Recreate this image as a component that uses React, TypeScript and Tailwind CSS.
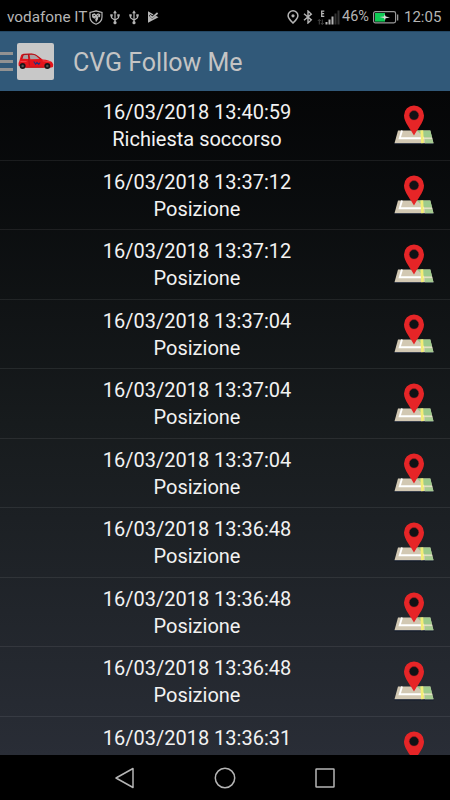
interface Entry {
  time: string;
  label?: string;
}

const entries: Entry[] = [
  { time: "16/03/2018 13:40:59", label: "Richiesta soccorso" },
  { time: "16/03/2018 13:37:12", label: "Posizione" },
  { time: "16/03/2018 13:37:12", label: "Posizione" },
  { time: "16/03/2018 13:37:04", label: "Posizione" },
  { time: "16/03/2018 13:37:04", label: "Posizione" },
  { time: "16/03/2018 13:37:04", label: "Posizione" },
  { time: "16/03/2018 13:36:48", label: "Posizione" },
  { time: "16/03/2018 13:36:48", label: "Posizione" },
  { time: "16/03/2018 13:36:48", label: "Posizione" },
  { time: "16/03/2018 13:36:31" },
];

function ShieldIcon() {
  return (
    <svg className="w-[14px] h-[15px]" viewBox="0 0 14 15" fill="none">
      <path
        d="M7 .8 13 2.500V7c0 3.400-2.400 5.900-6 7.200C3.400 12.900 1 10.400 1 7V2.500Z"
        stroke="#b5b5b5"
        strokeWidth="1.200"
      />
      <path
        d="M3 4.200 5.600 3.300 7 4.700 9 3.200 11.300 4.300 11 7.500 9.500 6.600 8.900 9.500 7 12.200 6.200 9.300 7.300 7.200 5.300 8.700 3.100 7.200Z"
        fill="#b5b5b5"
      />
      <path d="M4.500 5.500h1.500M8 6l1.500-1" stroke="#111" strokeWidth=".8" />
    </svg>
  );
}

function UsbIcon() {
  return (
    <svg className="w-[10px] h-[15px]" viewBox="0 0 10 15" fill="none">
      <path
        d="M5 2v10.500M1.500 5.500v2.300L5 10.300l3.500-2.500V5.500"
        stroke="#b5b5b5"
        strokeWidth="1.200"
      />
      <path d="M5 .3 6.900 3.200H3.100ZM.3 4.300h2.400v2.300H.3ZM7.300 4.300h2.400v2.300H7.300Z" fill="#b5b5b5" />
      <circle cx="5" cy="12.700" r="1.600" fill="#b5b5b5" />
    </svg>
  );
}

function PlayCheckIcon() {
  return (
    <svg className="w-3 h-3" viewBox="0 0 12 12" fill="none">
      <path d="M1 .3 11.500 6.300 1 11.700Z" fill="#b5b5b5" />
      <path d="M2.800 3.800 5.300 6.300 10.800 1.300" stroke="#000" strokeWidth="2.600" />
      <path d="M3 4.300 5.300 6.600 10.600 2" stroke="#b5b5b5" strokeWidth="1.700" />
    </svg>
  );
}

function LocationIcon() {
  return (
    <svg className="w-3 h-[14px]" viewBox="0 0 12 14" fill="none">
      <path
        d="M6 13.100C3.500 10.500 1.100 8.200 1.100 5.700a4.900 4.900 0 0 1 9.800 0c0 2.500-2.400 4.800-4.900 7.400Z"
        stroke="#b5b5b5"
        strokeWidth="1.500"
      />
      <circle cx="6" cy="5.800" r="1.600" fill="#b5b5b5" />
    </svg>
  );
}

function BluetoothIcon() {
  return (
    <svg className="w-[10px] h-[14px]" viewBox="0 0 10 14" fill="none">
      <path d="m1 3.700 7.300 6.200L5 13V1l3.300 3.100L1 10.300" stroke="#b5b5b5" strokeWidth="1.400" />
    </svg>
  );
}

function SignalIcon() {
  return (
    <svg className="w-[23px] h-[15px]" viewBox="0 0 23 15" fill="none">
      <path d="M7.300 1.100H4.700v5.300h2.600M4.700 3.700h2.400" stroke="#b5b5b5" strokeWidth="1.300" />
      <path d="M2.300 9.500v5M.8 11l1.500-1.500L3.700 11M5.300 9.500v5M3.900 13l1.400 1.500L6.700 13" stroke="#454545" />
      <path d="M8.500 12h2v2.500h-2ZM11.500 9.500h2v5h-2ZM14.500 6.500h2v8h-2Z" fill="#b5b5b5" />
      <path d="M17.500 3.500h2v11h-2ZM20.500 .5h2v14h-2Z" fill="#333" />
    </svg>
  );
}

function BatteryIcon() {
  return (
    <svg className="w-[26px] h-[13px]" viewBox="0 0 26 13" fill="none">
      <rect x=".6" y=".6" width="22" height="11.300" rx="1.800" stroke="#999" strokeWidth="1.200" />
      <path d="M2 2h10v8.600H2Z" fill="#0fcb55" />
      <path d="M24 3.500h1.300v6H24Z" fill="#999" />
      <path d="M6.500 6 11 5.400 11.500 3.300 12.800 5.500 17 6.400 12.600 7.200 12 9.200 10.800 7.100Z" fill="#d8d8d8" />
    </svg>
  );
}

function CarLogo() {
  return (
    <svg className="w-[37px] h-[37px]" viewBox="0 0 36 36" fill="none">
      <rect width="36" height="36" rx="2" fill="#c8c8c8" />
      <path
        d="M2.300 17.500 4 11.700Q4.600 10.500 6.500 10.400L14 10.200Q17 10.300 19 11.600L25 16Q31.500 16.500 34 18.500L35.300 21 35 23.300 32.500 24H5L1.500 22Q1 19.500 2.300 17.500Z"
        fill="#e5141c"
      />
      <path d="m5.200 15.300 1.200-3.400 4.200-.4.500 4ZM12.200 11.400h2.600q2 .1 3.500 1.100l3.500 3-8.800.2Z" fill="#a9a2a5" />
      <path d="m4.600 15.700 1.500-4.500 8-.4q2.700 0 4.700 1.200l4.500 3.700M11.200 11.400l.8 10.600" stroke="#771018" strokeWidth=".5" />
      <path d="M3.300 18h6M25 17.300l7.500 1" stroke="#ff5a5e" strokeWidth=".6" />
      <path d="m16.300 18 1.800 2.700 1.300-1.800 1.800 1.800 1.300-1.700" stroke="#27347c" strokeWidth="1.100" />
      <path d="M9 23.600h17" stroke="#a11" strokeWidth=".7" />
      <circle cx="5.500" cy="22.300" r="2.900" fill="#171719" />
      <circle cx="5.500" cy="22.300" r="1.200" fill="#555" />
      <circle cx="29.500" cy="22.300" r="2.900" fill="#171719" />
      <circle cx="29.500" cy="22.300" r="1.200" fill="#555" />
    </svg>
  );
}

function MapPinIcon() {
  return (
    <svg className="w-10 h-10" viewBox="0 0 40 40" fill="none">
      <path d="M.5 38h39v1.200H.5Z" fill="#061228" />
      <path d="M4 25.400h32.300L39.500 38.200H.5Z" fill="#d2c8b3" />
      <path d="M22.500 25.400h13.800L38.100 32.500h-7.500Z" fill="#9ecb8c" />
      <path d="M31 34.200h7.500l1 4H31Z" fill="#a6cb91" />
      <path d="M8 25.400 5.700 33.300H30" stroke="#fff" strokeWidth="1.900" />
      <path d="M30 33.300h8.300" stroke="#dfe5c4" strokeWidth="1.300" />
      <path d="m27.800 25.400 .7 12.800" stroke="#f2ed76" strokeWidth="2.800" />
      <path
        d="M20 30.600C17.300 24.800 10 17.500 10 10.400a10 10 0 0 1 20 0C30 17.500 22.700 24.800 20 30.600Z"
        fill="#e62527"
      />
      <circle cx="20" cy="10.300" r="4.800" fill="#101215" stroke="#b11d22" strokeWidth=".5" />
    </svg>
  );
}

function StatusBar() {
  return (
    <div className="h-[31px] shrink-0 flex items-center bg-black pl-[7px] pr-[10px] pt-[3px] text-[#b5b5b5]">
      <span className="w-[82px] text-[15.300px] whitespace-nowrap">vodafone IT</span>
      <ShieldIcon />
      <div className="flex items-center gap-[9px] ml-[7px]">
        <UsbIcon />
        <UsbIcon />
      </div>
      <div className="ml-[8px]">
        <PlayCheckIcon />
      </div>
      <div className="ml-auto flex items-center">
        <LocationIcon />
        <div className="ml-[4px]">
          <BluetoothIcon />
        </div>
        <div className="ml-[4px]">
          <SignalIcon />
        </div>
        <span className="w-[28px] ml-[2px] text-[14.500px] whitespace-nowrap">46%</span>
        <div className="ml-[3px]">
          <BatteryIcon />
        </div>
        <span className="w-[36px] ml-[5px] text-[15px] whitespace-nowrap">12:05</span>
      </div>
    </div>
  );
}

function EntryRow({ entry }: { entry: Entry }) {
  return (
    <li className="h-[69.560px] shrink-0 flex border-b border-white/8 pr-[15px] text-[#f2f2f2]">
      <div className="w-[394px] pt-[8px] text-center text-[20px] leading-[27px]">
        <p>{entry.time}</p>
        {entry.label && <p>{entry.label}</p>}
      </div>
      <div className="pt-[14px]">
        <MapPinIcon />
      </div>
    </li>
  );
}

export default function App() {
  return (
    <div className="w-[450px] h-[800px] flex flex-col overflow-hidden bg-black font-[Roboto,sans-serif]">
      <StatusBar />

      <header className="h-[60px] shrink-0 flex items-center bg-[#315979] border-t border-[#244865]">
        <div className="w-[13px] flex flex-col gap-[5px]">
          <div className="h-[3px] bg-[#929292]" />
          <div className="h-[3px] bg-[#929292]" />
          <div className="h-[3px] bg-[#929292]" />
        </div>
        <div className="ml-[4px]">
          <CarLogo />
        </div>
        <h1 className="ml-[19px] pt-[2px] text-[25px] text-[#c4c4c4]">CVG Follow Me</h1>
      </header>

      <ul className="h-[664px] shrink-0 flex flex-col overflow-hidden bg-linear-to-b from-[#050607] via-[#171b1d] to-[#292d36]">
        {entries.map((entry, i) => (
          <EntryRow key={i} entry={entry} />
        ))}
      </ul>

      {/* Navigation bar */}
      <nav className="flex-1 flex items-center justify-center gap-[78px]">
        <svg className="w-[22px] h-[22px]" viewBox="0 0 22 22" fill="none">
          <path d="M19 1.500v19L2 11Z" stroke="#b5b5b5" strokeWidth="1.500" strokeLinejoin="round" />
        </svg>
        <svg className="w-[22px] h-[22px]" viewBox="0 0 22 22" fill="none">
          <circle cx="11" cy="11" r="9.700" stroke="#b5b5b5" strokeWidth="1.500" />
        </svg>
        <svg className="w-[22px] h-[22px]" viewBox="0 0 22 22" fill="none">
          <rect x="2" y="2" width="18" height="18" rx=".5" stroke="#b5b5b5" strokeWidth="1.500" />
        </svg>
      </nav>
    </div>
  );
}
